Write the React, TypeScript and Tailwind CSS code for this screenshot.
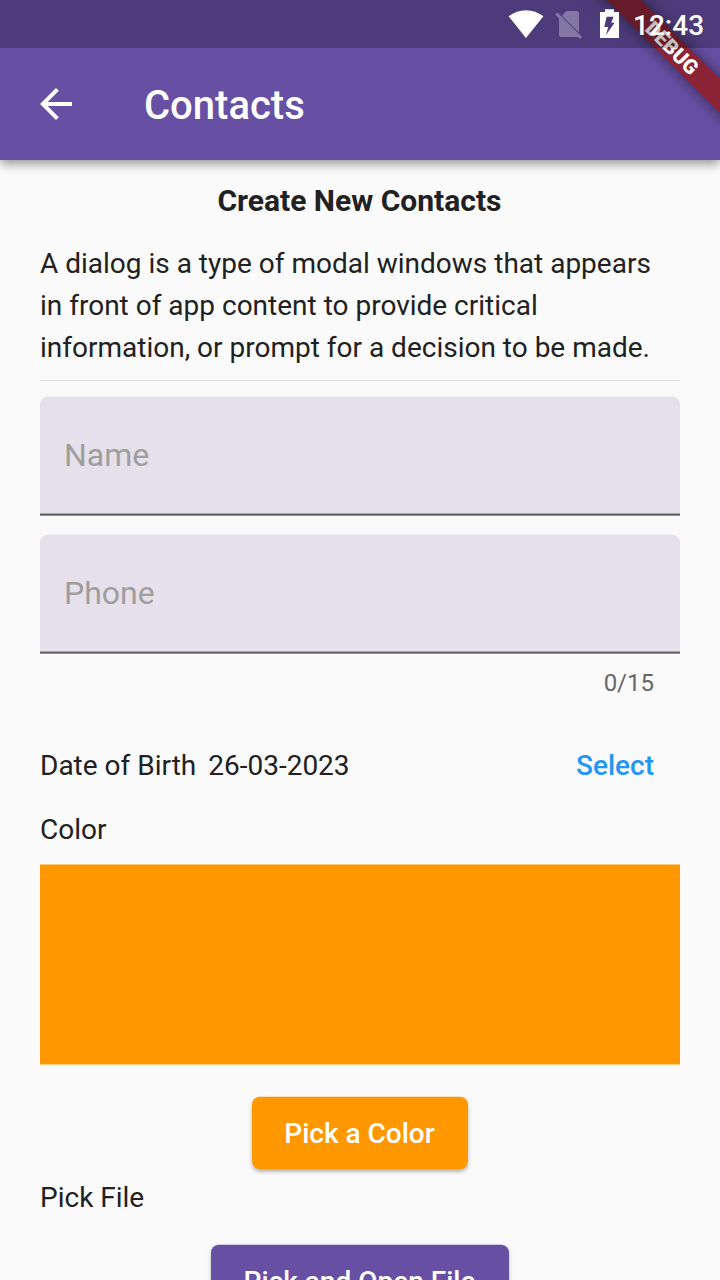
import type { ReactNode } from "react";

function StatusBar() {
  return (
    <div className="absolute inset-x-0 top-0 z-20 h-12 bg-black/25">
      <svg className="absolute inset-0" width="720" height="48" viewBox="0 0 720 48">
        <path d="M508.6 16.3C519 8.3 533 8.3 543.4 16.3L526 38Z" fill="#fff" />
        <g fill="#fff" opacity="0.3">
          <path d="M566.5 11H576.5Q579 11 579 13.5V32.4L561.8 15.7Z" />
          <path d="M559 16L579 36.5Q578 37 577 37H561.5Q559 37 559 34.5Z" />
          <path d="M555.2 14.6L557.3 12.5L582.1 36.9L580 39Z" />
        </g>
        <path
          fill="#fff"
          fillRule="evenodd"
          d="M605 9.3H614V12H619V38H600V12H605ZM606.6 16.7L604.3 27H608.2L605.8 35.2L614.6 22.8H611.2L613.6 16.7Z"
        />
      </svg>
      <span className="absolute top-[9px] left-[633px] text-[28px] leading-[33px] font-medium text-white">12:43</span>
    </div>
  );
}

function DebugRibbon() {
  return (
    <div className="pointer-events-none absolute top-0 right-0 z-10 h-[200px] w-[200px] overflow-hidden">
      <div className="absolute top-[56px] left-[100px] flex h-6 w-[200px] origin-[100px_-56px] rotate-45 items-center justify-center bg-[#8a2336] text-[20.4px] leading-[20px] font-black text-white shadow-[0_0_16px_rgba(0,0,0,0.5)]">
        DEBUG
      </div>
    </div>
  );
}

function Field({ label }: { label: string }) {
  return (
    <div className="flex h-[119px] flex-col overflow-hidden rounded-t-lg bg-[#e6e0eb] shadow-[0_-1px_0_#f2eff4]">
      <div className="flex h-[116px] items-center px-6">
        <span className="text-[32px] leading-[38px] text-[#9e9e9e]">{label}</span>
      </div>
      <div className="h-px bg-[#aba7af]" />
      <div className="h-px bg-[#605d63]" />
      <div className="h-px bg-[#929193]" />
    </div>
  );
}

function RaisedButton({ className, children }: { className: string; children: ReactNode }) {
  return (
    <button
      className={
        "flex h-[72px] shrink-0 items-center justify-center rounded-lg pr-px text-[28px] leading-[33px] font-medium text-white " +
        className
      }
    >
      {children}
    </button>
  );
}

export default function App() {
  return (
    <div className="relative flex h-[1280px] w-[720px] flex-col overflow-hidden bg-[#fafafa] font-[Roboto,sans-serif] text-[#212121]">
      <StatusBar />
      <DebugRibbon />
      <header className="flex h-40 shrink-0 items-center bg-[#6750a4] pt-12 pl-10 text-white shadow-[0_4px_10px_rgba(0,0,0,0.4)]">
        <svg width="32" height="32" viewBox="4 4 16 16" fill="#fff">
          <path d="M20 11H7.83l5.59-5.59L12 4l-8 8 8 8 1.41-1.41L7.83 13H20v-2z" />
        </svg>
        <h1 className="ml-[72px] pt-1 text-[40px] leading-[48px] font-medium">Contacts</h1>
      </header>
      <main className="flex flex-col px-10">
        <h2 className="mt-[23px] pr-px text-center text-[30px] leading-9 font-bold">Create New Contacts</h2>
        <p className="mt-6 text-[28px] leading-[42px] whitespace-nowrap">
          A dialog is a type of modal windows that appears
          <br />
          in front of app content to provide critical
          <br />
          information, or prompt for a decision to be made.
        </p>
        <hr className="mt-[11px] mb-4 border-[#e0e0e0]" />
        <Field label="Name" />
        <div className="h-[19px]" />
        <Field label="Phone" />
        <div className="mt-[15px] self-end pr-[26px] text-[24px] leading-7 text-[#666]">0/15</div>
        <div className="mt-[52px] flex h-[33px] items-center text-[28px] leading-[33px]">
          <span>Date of Birth</span>
          <span className="ml-3">26-03-2023</span>
          <span className="mr-[26px] ml-auto font-medium text-[#2196f3]">Select</span>
        </div>
        <div className="mt-[31px] text-[28px] leading-[33px]">Color</div>
        <div className="mt-[19px] h-[199px] bg-[#ff9800] shadow-[0_-1px_0_#fcc97d,0_1px_0_#fcc97d]" />
        <RaisedButton className="mt-[33px] w-[216px] self-center bg-[#ff9800] shadow-[0_-0.5px_0_#fcc97d,0_4px_4px_-2px_rgba(0,0,0,0.2),0_2px_5px_rgba(0,0,0,0.2)]">
          Pick a Color
        </RaisedButton>
        <div className="mt-3 text-[28px] leading-[33px]">Pick File</div>
        <RaisedButton className="mt-[31px] w-[298px] self-center bg-[#6750a4] shadow-[0_-0.5px_0_#b1a5cf,0_4px_4px_-2px_rgba(0,0,0,0.2),0_2px_5px_rgba(0,0,0,0.2)]">
          Pick and Open File
        </RaisedButton>
      </main>
    </div>
  );
}
